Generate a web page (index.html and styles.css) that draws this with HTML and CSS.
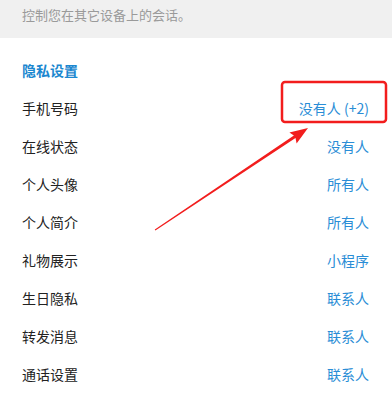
FILE: index.html
```html
<!DOCTYPE html>
<html lang="zh-CN">
<head>
    <meta charset="UTF-8">
    <meta name="viewport" content="width=device-width, initial-scale=1.0">
    <title>隐私设置</title>
    <link rel="stylesheet" href="styles.css">
</head>
<body>
    <div class="session-note">控制您在其它设备上的会话。</div>

    <div class="privacy-section">
        <div class="section-title">隐私设置</div>
        <div class="setting-row"><span class="label">手机号码</span><span class="value">没有人 (+2)</span></div>
        <div class="setting-row"><span class="label">在线状态</span><span class="value">没有人</span></div>
        <div class="setting-row"><span class="label">个人头像</span><span class="value">所有人</span></div>
        <div class="setting-row"><span class="label">个人简介</span><span class="value">所有人</span></div>
        <div class="setting-row"><span class="label">礼物展示</span><span class="value">小程序</span></div>
        <div class="setting-row"><span class="label">生日隐私</span><span class="value">联系人</span></div>
        <div class="setting-row"><span class="label">转发消息</span><span class="value">联系人</span></div>
        <div class="setting-row"><span class="label">通话设置</span><span class="value">联系人</span></div>
    </div>

    <!-- 标注：红框和箭头 -->
    <svg class="annotation" width="392" height="395" viewBox="0 0 392 395">
        <rect x="282" y="82" width="104" height="40" rx="3" fill="none" stroke="#f21d1d" stroke-width="2.5"/>
        <polygon fill="#f21d1d" points="155,230 155.4,230.4 295.5,138.1 296.6,143.4 308,128 289.4,132.6 293.9,135.6 154.8,229.6"/>
    </svg>
</body>
</html>
```

FILE: styles.css
```css
* {
    box-sizing: border-box;
    margin: 0;
    padding: 0;
}

body {
    width: 392px;
    height: 395px;
    font-family: "Noto Sans CJK SC", "Noto Sans", sans-serif;
    background-color: #ffffff;
    overflow: hidden;
    position: relative;
}

/* 顶部说明 */
.session-note {
    height: 38px;
    padding: 6px 22px 0;
    background-color: #f0f0f0;
    color: #9a9a9a;
    font-size: 13px;
    line-height: 18px;
}

/* 隐私设置 */
.privacy-section {
    padding: 22px 23px 0 22px;
}

.section-title {
    color: #1b87cf;
    font-size: 14px;
    font-weight: bold;
    line-height: 20px;
    margin-bottom: 9px;
}

.setting-row {
    height: 38px;
    display: flex;
    justify-content: space-between;
    align-items: center;
    font-size: 14px;
}

.setting-row .label {
    color: #222222;
}

.setting-row .value {
    color: #2a8dd6;
}

.annotation {
    position: absolute;
    top: 0;
    left: 0;
    pointer-events: none;
}
```
